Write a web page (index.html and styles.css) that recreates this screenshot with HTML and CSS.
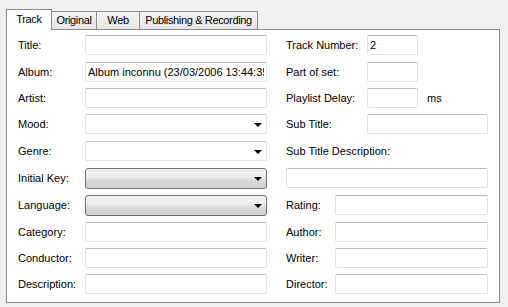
FILE: index.html
```html
<!DOCTYPE html>
<html lang="en">
<head>
    <meta charset="UTF-8">
    <title>Track</title>
    <link rel="stylesheet" href="styles.css">
</head>
<body>

<ul class="tabs">
    <li class="tab active">Track</li>
    <li class="tab tab-original">Original</li>
    <li class="tab tab-web">Web</li>
    <li class="tab tab-pub">Publishing &amp; Recording</li>
</ul>

<div class="page">
    <div class="form">
        <!-- row 1 -->
        <div class="field"><label class="lbl">Title:</label><input class="txt wide" type="text"></div>
        <div class="field"><label class="lbl lbl-r">Track Number:</label><input class="txt small" type="text" value="2"></div>
        <!-- row 2 -->
        <div class="field"><label class="lbl">Album:</label><input class="txt wide" type="text" value="Album inconnu (23/03/2006 13:44:35)"></div>
        <div class="field"><label class="lbl lbl-r">Part of set:</label><input class="txt small" type="text"></div>
        <!-- row 3 -->
        <div class="field"><label class="lbl">Artist:</label><input class="txt wide" type="text"></div>
        <div class="field"><label class="lbl lbl-r">Playlist Delay:</label><input class="txt small" type="text"><span class="unit">ms</span></div>
        <!-- row 4 -->
        <div class="field"><label class="lbl">Mood:</label><div class="combo"><span class="arrow"></span></div></div>
        <div class="field"><label class="lbl lbl-r">Sub Title:</label><input class="txt mid" type="text"></div>
        <!-- row 5 -->
        <div class="field"><label class="lbl">Genre:</label><div class="combo"><span class="arrow"></span></div></div>
        <div class="field"><label class="lbl lbl-free">Sub Title Description:</label></div>
        <!-- row 6 -->
        <div class="field"><label class="lbl">Initial Key:</label><div class="combo locked"><span class="arrow"></span></div></div>
        <div class="field"><input class="txt full" type="text"></div>
        <!-- row 7 -->
        <div class="field"><label class="lbl">Language:</label><div class="combo locked"><span class="arrow"></span></div></div>
        <div class="field"><label class="lbl lbl-s">Rating:</label><input class="txt long" type="text"></div>
        <!-- row 8 -->
        <div class="field"><label class="lbl">Category:</label><input class="txt wide" type="text"></div>
        <div class="field"><label class="lbl lbl-s">Author:</label><input class="txt long" type="text"></div>
        <!-- row 9 -->
        <div class="field"><label class="lbl">Conductor:</label><input class="txt wide" type="text"></div>
        <div class="field"><label class="lbl lbl-s">Writer:</label><input class="txt long" type="text"></div>
        <!-- row 10 -->
        <div class="field"><label class="lbl">Description:</label><input class="txt wide" type="text"></div>
        <div class="field"><label class="lbl lbl-s">Director:</label><input class="txt long" type="text"></div>
    </div>
</div>

</body>
</html>
```

FILE: styles.css
```css
body {
    font-family: "Liberation Sans", Arial, sans-serif;
    font-size: 11px;
    color: #000;
    margin: 0;
    padding: 0;
    background-color: #f0f0f0;
}

.tabs {
    list-style-type: none;
    display: flex;
    align-items: flex-end;
    margin: 9px 0 0 6px;
    padding: 0;
    height: 20px;
    letter-spacing: -0.35px;
}

.tab {
    box-sizing: border-box;
    height: 18px;
    margin-right: -1px;
    padding-top: 2px;
    text-align: center;
    white-space: nowrap;
    border: 1px solid #898c95;
    border-bottom: none;
    background: linear-gradient(#f3f3f3, #e5e5e5);
    position: relative;
}

.tab.active {
    height: 21px;
    width: 46px;
    padding-top: 3px;
    margin-bottom: -1px;
    background: #fff;
    z-index: 1;
}

.tab-original { width: 46px; }
.tab-web { width: 44px; }
.tab-pub { width: 119px; }

.page {
    box-sizing: border-box;
    margin-left: 6px;
    width: 494px;
    height: 274px;
    border: 1px solid #898c95;
    background-color: #fff;
}

.form {
    display: grid;
    grid-template-columns: 249px 202px;
    grid-template-rows: 27px 26px 26px 27px 27px 27px 27px 26px 26px 27px;
    column-gap: 19px;
    padding: 5px 0 0 11px;
}

.field {
    display: flex;
    align-items: center;
    height: 20px;
}

.lbl {
    width: 67px;
    flex-shrink: 0;
    white-space: nowrap;
}

.lbl-r { width: 81px; }
.lbl-s { width: 49px; }
.lbl-free { width: auto; }

.txt {
    box-sizing: border-box;
    height: 20px;
    margin: 0;
    padding: 0 2px;
    font: inherit;
    color: #000;
    background: #fff;
    border: 1px solid #dfe2e8;
    border-top-color: #b9bcc4;
    border-radius: 2px;
    outline: none;
}

.wide { width: 182px; }
.small { width: 51px; }
.mid { width: 121px; }
.full { width: 202px; }
.long { width: 153px; }

.unit {
    margin-left: 9px;
}

.combo {
    box-sizing: border-box;
    width: 182px;
    height: 20px;
    border: 1px solid #dfe2e8;
    border-top-color: #c6c9d0;
    border-radius: 2px;
    background: #fff;
    display: flex;
    align-items: center;
    justify-content: flex-end;
    padding-right: 4px;
}

.combo.locked {
    height: 21px;
    border: 1px solid #707070;
    border-radius: 3px;
    background: linear-gradient(#f2f2f2 0%, #ebebeb 45%, #dddddd 55%, #cfcfcf 100%);
}

.arrow {
    width: 0;
    height: 0;
    border-left: 4px solid transparent;
    border-right: 4px solid transparent;
    border-top: 4px solid #000;
    margin-top: 1px;
}
```
